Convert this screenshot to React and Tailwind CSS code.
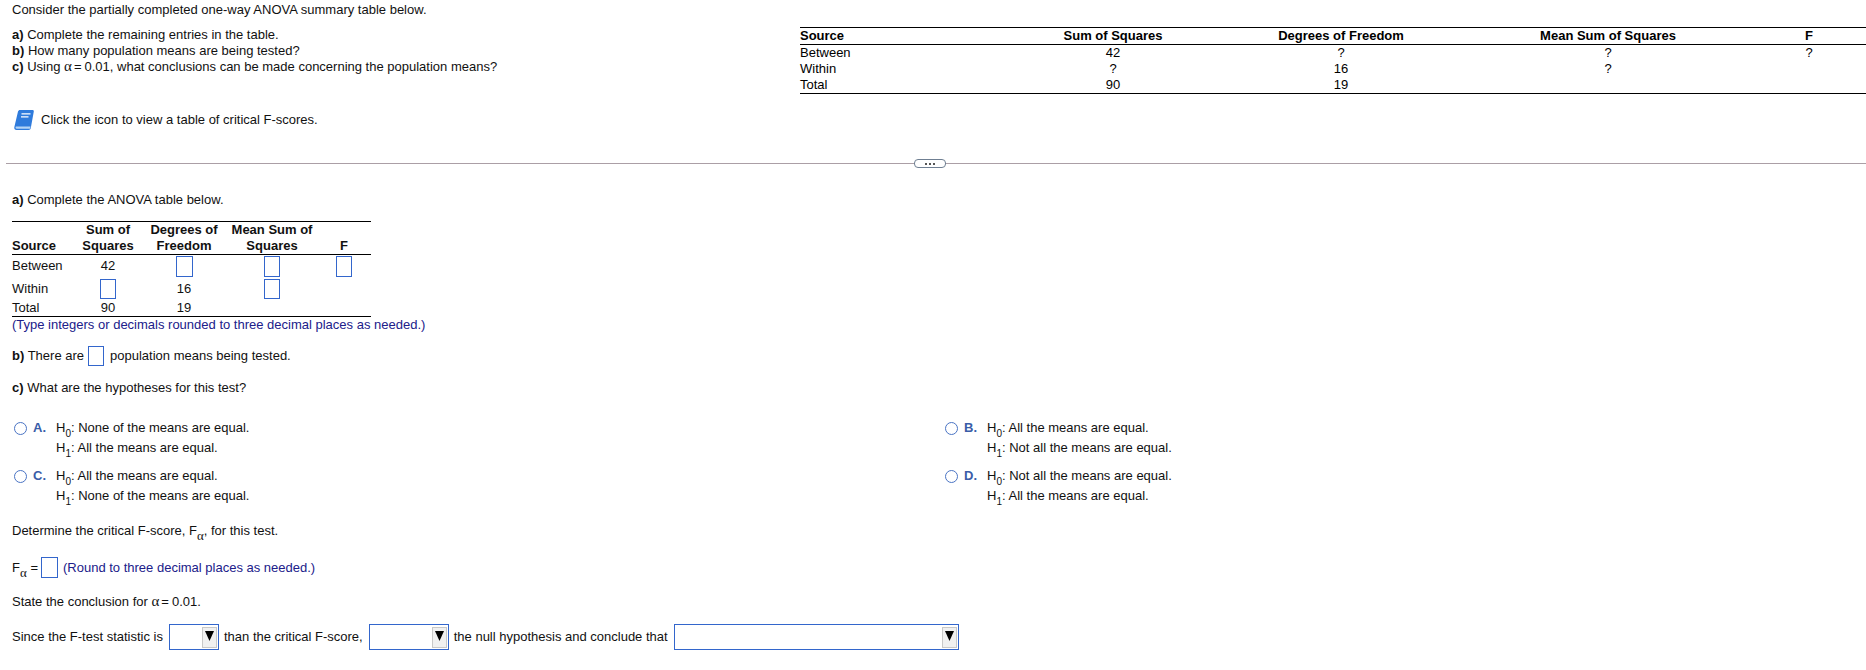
const font = { fontFamily: '"Liberation Sans", Arial, sans-serif' };

const Box = ({ w = 'w-[16px]', h = 'h-[20px]' }) => (
  <span className={`inline-block ${w} ${h} border border-[#3366cc] bg-white align-middle`} />
);

const TableBox = ({ w = 'w-[16px]', h = 'h-[20px]' }) => (
  <span className={`mx-auto block ${w} ${h} border border-[#3366cc] bg-white`} />
);

const Alpha = () => <span className="font-['Liberation_Serif'] text-[15px] leading-none">α</span>;

const SubAlpha = () => (
  <sub className="font-['Liberation_Serif'] text-[13px] leading-none align-[-2px]">α</sub>
);

const AlphaValue = () => (
  <>
    <Alpha /><span className="ml-[2px] mr-[3px]">=</span>0.01
  </>
);

const Hyp = ({ n }) => (
  <span>
    H<sub className="text-[10px] leading-none align-[-3px]">{n}</sub>:
  </span>
);

const Choice = ({ letter, h0, h1 }) => (
  <div className="flex h-[48px] leading-[20px]">
    <span className="ml-[2px] mt-[4px] h-[13px] w-[13px] shrink-0 rounded-full border-[1.5px] border-[#4a74c4] bg-white" />
    <span className="ml-[6px] w-[23px] shrink-0 font-bold text-[#3a5da8]">{letter}.</span>
    <div>
      <div><Hyp n="0" /> {h0}</div>
      <div><Hyp n="1" /> {h1}</div>
    </div>
  </div>
);

const Select = ({ width }) => (
  <span className={`relative block ${width} h-[26px] border border-[#3366cc] bg-white`}>
    <span className="absolute right-[1px] top-[2px] flex h-[21px] w-[15px] items-start justify-center border border-[#c8c8c8] bg-[#f0f0f0] pt-[3px]">
      <svg width="9" height="10" viewBox="0 0 9 10"><path d="M0 0h9L4.500 10z" fill="#000" /></svg>
    </span>
  </span>
);

const BookIcon = () => (
  <svg width="20" height="20" viewBox="0 0 20 20" className="ml-[2px] shrink-0">
    <path d="M4 1.500C4.300.600 5 0 6 0h12.500c.9 0 1.500.7 1.300 1.600L16.800 18c-.2 1.100-1 2-2.300 2H2.500C.900 20 0 18.800.300 17.300z" fill="#2f7bdc" />
    <path d="M2.200 16.400h14.300l-.5 2.400H2.800c-1.500 0-1.700-2.400-.6-2.400z" fill="#b4d4f5" />
    <path d="M7.500 3.800h9M7 6.800h7.500" stroke="#fff" strokeWidth="1.300" />
  </svg>
);

const topRows = [
  ['Between', '42', '?', '?', '?'],
  ['Within', '?', '16', '?', ''],
  ['Total', '90', '19', '', ''],
];

export default function App() {
  return (
    <div style={font} className="h-[670px] w-[1866px] overflow-hidden bg-white text-[13px] text-[#111]">
      <div className="flex h-[163px]">
        <div className="w-[800px] shrink-0 pl-[12px] pt-[2px]">
          <p className="leading-[16px]">Consider the partially completed one-way ANOVA summary table below.</p>
          <div className="mt-[9px] leading-[16px]">
            <p><b>a)</b> Complete the remaining entries in the table.</p>
            <p><b>b)</b> How many population means are being tested?</p>
            <p><b>c)</b> Using <AlphaValue />, what conclusions can be made concerning the population means?</p>
          </div>
          <div className="mt-[35px] flex items-center gap-[7px]">
            <BookIcon />
            <span>Click the icon to view a table of critical F-scores.</span>
          </div>
        </div>
        <div className="flex-1 pt-[27px]">
          <table className="w-[1066px] table-fixed border-y border-black leading-[16px] text-black">
            <thead>
              <tr className="border-b border-black">
                <th className="w-[208px] text-left font-bold">Source</th>
                <th className="w-[210px] font-bold">Sum of Squares</th>
                <th className="w-[246px] font-bold">Degrees of Freedom</th>
                <th className="w-[288px] font-bold">Mean Sum of Squares</th>
                <th className="font-bold">F</th>
              </tr>
            </thead>
            <tbody>
              {topRows.map((row) => (
                <tr key={row[0]}>
                  {row.map((cell, i) => (
                    <td key={i} className={i === 0 ? 'text-left' : 'text-center'}>{cell}</td>
                  ))}
                </tr>
              ))}
            </tbody>
          </table>
        </div>
      </div>

      <div className="relative ml-[6px] h-[1px] bg-[#ab9fa6]">
        <span className="absolute left-[908px] top-[-4px] flex h-[9px] w-[32px] items-center justify-center gap-[2px] rounded-[4px] border border-[#6f7f92] bg-white">
          <i className="h-[2px] w-[2px] bg-[#555]" />
          <i className="h-[2px] w-[2px] bg-[#555]" />
          <i className="h-[2px] w-[2px] bg-[#555]" />
        </span>
      </div>

      <div className="pl-[12px] pt-[28px]">
        <p className="leading-[16px]"><b>a)</b> Complete the ANOVA table below.</p>
        <table className="mt-[13px] w-[359px] table-fixed border-y border-black leading-[16px]">
          <thead>
            <tr className="border-b border-black text-center align-bottom">
              <th className="w-[63px] text-left font-bold">Source</th>
              <th className="w-[66px] font-bold">Sum of<br />Squares</th>
              <th className="w-[86px] font-bold">Degrees of<br />Freedom</th>
              <th className="w-[90px] font-bold">Mean Sum of<br />Squares</th>
              <th className="font-bold">F</th>
            </tr>
          </thead>
          <tbody className="text-center">
            <tr className="h-[23px]">
              <td className="text-left">Between</td>
              <td>42</td>
              <td><TableBox w="w-[17px]" h="h-[21px]" /></td>
              <td><TableBox h="h-[21px]" /></td>
              <td><TableBox h="h-[21px]" /></td>
            </tr>
            <tr className="h-[22px]">
              <td className="text-left">Within</td>
              <td><TableBox /></td>
              <td>16</td>
              <td><TableBox /></td>
              <td />
            </tr>
            <tr className="h-[16px]">
              <td className="text-left">Total</td>
              <td>90</td>
              <td>19</td>
              <td />
              <td />
            </tr>
          </tbody>
        </table>
        <p className="leading-[16px] text-[#20208a]">(Type integers or decimals rounded to three decimal places as needed.)</p>

        <p className="mt-[13px] flex h-[20px] items-center leading-[20px]">
          <span><b>b)</b> There are</span>
          <span className="ml-[4px] mr-[6px] flex"><Box /></span>
          <span>population means being tested.</span>
        </p>
        <p className="mt-[14px] leading-[16px]"><b>c)</b> What are the hypotheses for this test?</p>

        <div className="mt-[22px] grid grid-cols-[931px_1fr]">
          <Choice letter="A" h0="None of the means are equal." h1="All the means are equal." />
          <Choice letter="B" h0="All the means are equal." h1="Not all the means are equal." />
          <Choice letter="C" h0="All the means are equal." h1="None of the means are equal." />
          <Choice letter="D" h0="Not all the means are equal." h1="All the means are equal." />
        </div>

        <p className="mt-[9px] leading-[16px]">
          Determine the critical F-score, F<SubAlpha />, for this test.
        </p>
        <p className="mt-[18px] flex h-[22px] items-center">
          <span>F<SubAlpha /> =</span>
          <span className="ml-[3px] mr-[5px] flex"><Box w="w-[17px]" h="h-[21px]" /></span>
          <span className="text-[#20208a]">(Round to three decimal places as needed.)</span>
        </p>
        <p className="mt-[15px] leading-[16px]">State the conclusion for <AlphaValue />.</p>
        <div className="mt-[14px] flex items-center gap-[6px]">
          <span>Since the F-test statistic is</span>
          <Select width="w-[50px]" />
          <span className="-ml-[1px]">than the critical F-score,</span>
          <Select width="w-[80px]" />
          <span className="-ml-[1px]">the null hypothesis and conclude that</span>
          <Select width="w-[285px]" />
        </div>
      </div>
    </div>
  );
}
